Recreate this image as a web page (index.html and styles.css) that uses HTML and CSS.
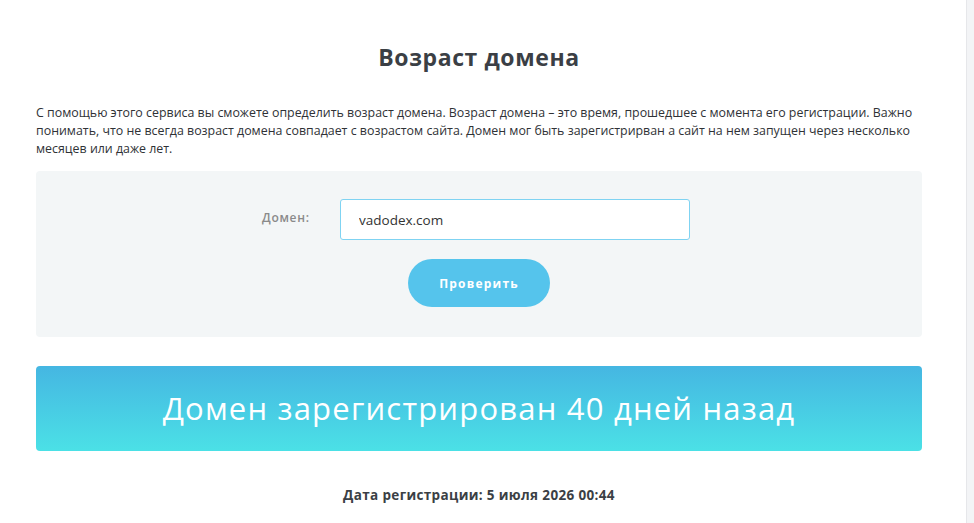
FILE: index.html
```html
<!DOCTYPE html>
<html lang="ru">
<head>
<meta charset="utf-8">
<title>Возраст домена</title>
<link rel="stylesheet" href="styles.css">
</head>
<body>
<div class="page">
  <main class="content">
    <h1 class="title">Возраст домена</h1>
    <p class="intro">С помощью этого сервиса вы сможете определить возраст домена. Возраст домена – это время, прошедшее с момента его регистрации. Важно понимать, что не всегда возраст домена совпадает с возрастом сайта. Домен мог быть зарегистрирван а сайт на нем запущен через несколько месяцев или даже лет.</p>
    <form class="check-box">
      <div class="field-row">
        <label class="field-label" for="domain">Домен:</label>
        <input class="field-input" id="domain" type="text" value="vadodex.com">
      </div>
      <button class="check-btn" type="button">Проверить</button>
    </form>
    <div class="result">Домен зарегистрирован 40 дней назад</div>
    <p class="reg-date">Дата регистрации: 5 июля 2026 00:44</p>
  </main>
  <aside class="gutter"></aside>
</div>
</body>
</html>
```
FILE: styles.css
```css
* { box-sizing: border-box; }
html, body { margin: 0; padding: 0; height: 100%; }
body {
  font-family: "Open Sans", "Noto Sans", sans-serif;
  color: #333;
  background: #fff;
}
.page {
  display: flex;
  min-height: 523px;
}
.content {
  width: 966px;
  padding: 0 44px 0 36px;
}
.gutter {
  flex: 1;
  background: #f3f4f6;
  border-left: 1px solid #e6e7ea;
}
.title {
  margin: 41px 0 0;
  text-align: center;
  font-size: 23px;
  font-weight: 700;
  letter-spacing: 0.6px;
  color: #3b3f45;
  line-height: 32px;
}
.intro {
  margin: 31px 0 0;
  font-size: 12.4px;
  letter-spacing: 0;
  line-height: 18px;
  color: #2f3236;
}
.check-box {
  margin: 13px 0 0;
  height: 166px;
  background: #f3f6f7;
  border-radius: 4px;
  padding-top: 28px;
  display: flex;
  flex-direction: column;
  align-items: center;
}
.field-row {
  display: flex;
  align-items: center;
  margin-right: 6px;
}
.field-label {
  width: 78px;
  font-size: 12px;
  letter-spacing: 0.7px;
  font-weight: 600;
  color: #8a8a8a;
  margin-top: -4px;
}
.field-input {
  width: 350px;
  height: 41px;
  border: 1px solid #7fd3f2;
  border-radius: 3px;
  padding: 0 18px;
  font-family: inherit;
  font-size: 13.5px;
  color: #333;
  background: #fff;
  outline: none;
}
.check-btn {
  margin-top: 19px;
  width: 142px;
  height: 48px;
  border: none;
  border-radius: 24px;
  background: #55c4ec;
  color: #fff;
  font-family: inherit;
  font-weight: 700;
  font-size: 12px;
  letter-spacing: 1.2px;
}
.result {
  margin-top: 29px;
  height: 85px;
  border-radius: 4px;
  background: linear-gradient(to bottom, #45b6e2, #4be1e6);
  color: #fff;
  font-size: 31px;
  letter-spacing: 1.2px;
  font-weight: 400;
  display: flex;
  align-items: center;
  justify-content: center;
  padding-bottom: 2px;
}
.reg-date {
  margin: 35px 0 0;
  text-align: center;
  font-size: 13.5px;
  letter-spacing: 0.35px;
  font-weight: 700;
  color: #3b3f45;
}
```
